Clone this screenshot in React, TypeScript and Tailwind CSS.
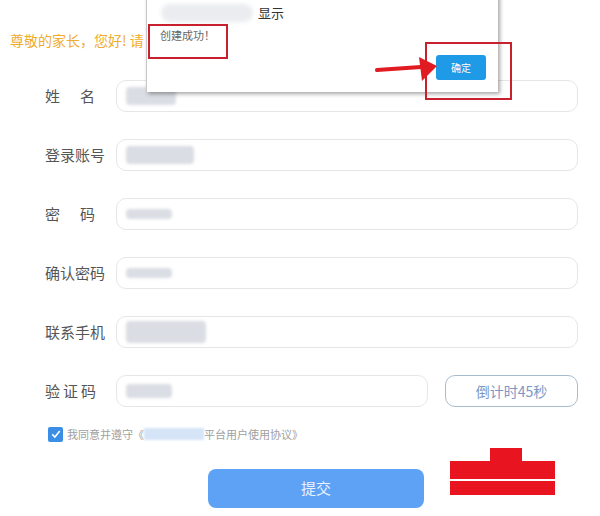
// 家长注册表单 + 浏览器弹窗提示 截图还原
const font = { fontFamily: '"Noto Sans CJK SC", "Liberation Sans", sans-serif' };

/** 表单行: 标签 + 输入框 (内容已打码) */
const rows = [
    { label: '姓名', wide: true, blur: 'w-[50px] h-[18px]' },
    { label: '登录账号', wide: false, blur: 'w-[68px] h-[18px]' },
    { label: '密码', wide: true, blur: 'w-[46px] h-[10px]' },
    { label: '确认密码', wide: false, blur: 'w-[46px] h-[10px]' },
    { label: '联系手机', wide: false, blur: 'w-[80px] h-[22px]' },
];

function Blur({ className }: { className: string }) {
    return <div className={`${className} bg-gray-300/80 blur-[1.5px] rounded-sm`} />;
}

export default function App() {
    return (
        <div className="relative w-[600px] h-[516px] overflow-hidden bg-white" style={font}>
            {/* 提示语 */}
            <div className="pt-[31px] pl-[10px] text-[14px] leading-[18px] text-[#f0ac2c]">
                尊敬的家长，您好! 请
            </div>

            {/* 表单 */}
            <div className="mt-[31px] pl-[45px] pr-[22px] flex flex-col gap-[27px]">
                {rows.map((row) => (
                    <div key={row.label} className="flex items-center">
                        <div className={`w-[71px] text-[15px] text-[#555] ${row.wide ? 'tracking-[20px]' : ''}`}>
                            {row.label}
                        </div>
                        <div className="flex-1 h-[32px] rounded-[10px] border border-[#e6e6e6] flex items-center pl-[9px]">
                            <Blur className={row.blur} />
                        </div>
                    </div>
                ))}
                <div className="flex items-center">
                    <div className="w-[71px] text-[15px] text-[#555] tracking-[3px]">验证码</div>
                    <div className="w-[312px] h-[32px] rounded-[10px] border border-[#e6e6e6] flex items-center pl-[9px]">
                        <Blur className="w-[46px] h-[14px]" />
                    </div>
                    <div className="ml-[17px] flex-1 h-[32px] rounded-[10px] border border-[#a9bccd] flex items-center justify-center text-[14px] text-[#7b98c4]">
                        倒计时45秒
                    </div>
                </div>
            </div>

            {/* 协议 */}
            <div className="mt-[19px] pl-[48px] flex items-center text-[11px] text-[#a0a0a0]">
                <div className="w-[15px] h-[15px] rounded-[2px] bg-[#3a8ee6] flex items-center justify-center">
                    <svg viewBox="0 0 16 16" className="w-[12px] h-[12px]">
                        <path d="M3 8.5 L6.5 12 L13 4" fill="none" stroke="white" strokeWidth="2.2" />
                    </svg>
                </div>
                <span className="ml-[4px]">我同意并遵守《</span>
                <span className="w-[60px] h-[12px] bg-[#d6e4f7] blur-[1px]" />
                <span>平台用户使用协议》</span>
            </div>

            {/* 提交 */}
            <div className="mt-[26px] pl-[208px]">
                <div className="w-[216px] h-[39px] rounded-[8px] bg-[#5ea2f6] flex items-center justify-center text-[15px] text-[#eaf2ff]">
                    提交
                </div>
            </div>

            {/* 红色涂抹 */}
            <div className="absolute left-[450px] top-[448px] w-[105px] flex flex-col items-center">
                <div className="w-[32px] h-[13px] bg-[#e8141f] ml-[6px]" />
                <div className="w-full h-[18px] bg-[#e8141f]" />
                <div className="w-full h-[14px] bg-[#e8141f] mt-[2px]" />
            </div>

            {/* 浏览器提示弹窗 */}
            <div className="absolute left-[146px] top-[-8px] w-[352px] h-[100px] bg-white border-l border-[#c8c8c8] shadow-[2px_2px_4px_rgba(0,0,0,0.35)]">
                <div className="flex items-center mt-[11px] pl-[14px]">
                    <div className="w-[92px] h-[18px] rounded-full bg-gray-200/80 blur-[2px]" />
                    <span className="ml-[5px] text-[13px] text-[#333]">显示</span>
                </div>
                <div className="mt-[4px] pl-[13px] text-[11px] text-[#666]">创建成功！</div>
                <div className="absolute left-[289px] top-[63px] w-[50px] h-[25px] rounded-[3px] bg-[#1f9ae6] flex items-center justify-center text-[10px] text-white">
                    确定
                </div>
            </div>

            {/* 标注框 */}
            <div className="absolute left-[148px] top-[24px] w-[80px] h-[35px] border-2 border-[#c8202c]" />
            <div className="absolute left-[425px] top-[42px] w-[87px] h-[58px] border-2 border-[#c8202c]" />
            {/* 红色箭头 */}
            <svg className="absolute left-[375px] top-[54px]" width="66" height="30" viewBox="0 0 66 30">
                <path d="M2 16 L46 13" stroke="#e01b22" strokeWidth="4" strokeLinecap="round" />
                <path d="M44 3 L62 12 L47 27 Z" fill="#e01b22" />
            </svg>
        </div>
    );
}
